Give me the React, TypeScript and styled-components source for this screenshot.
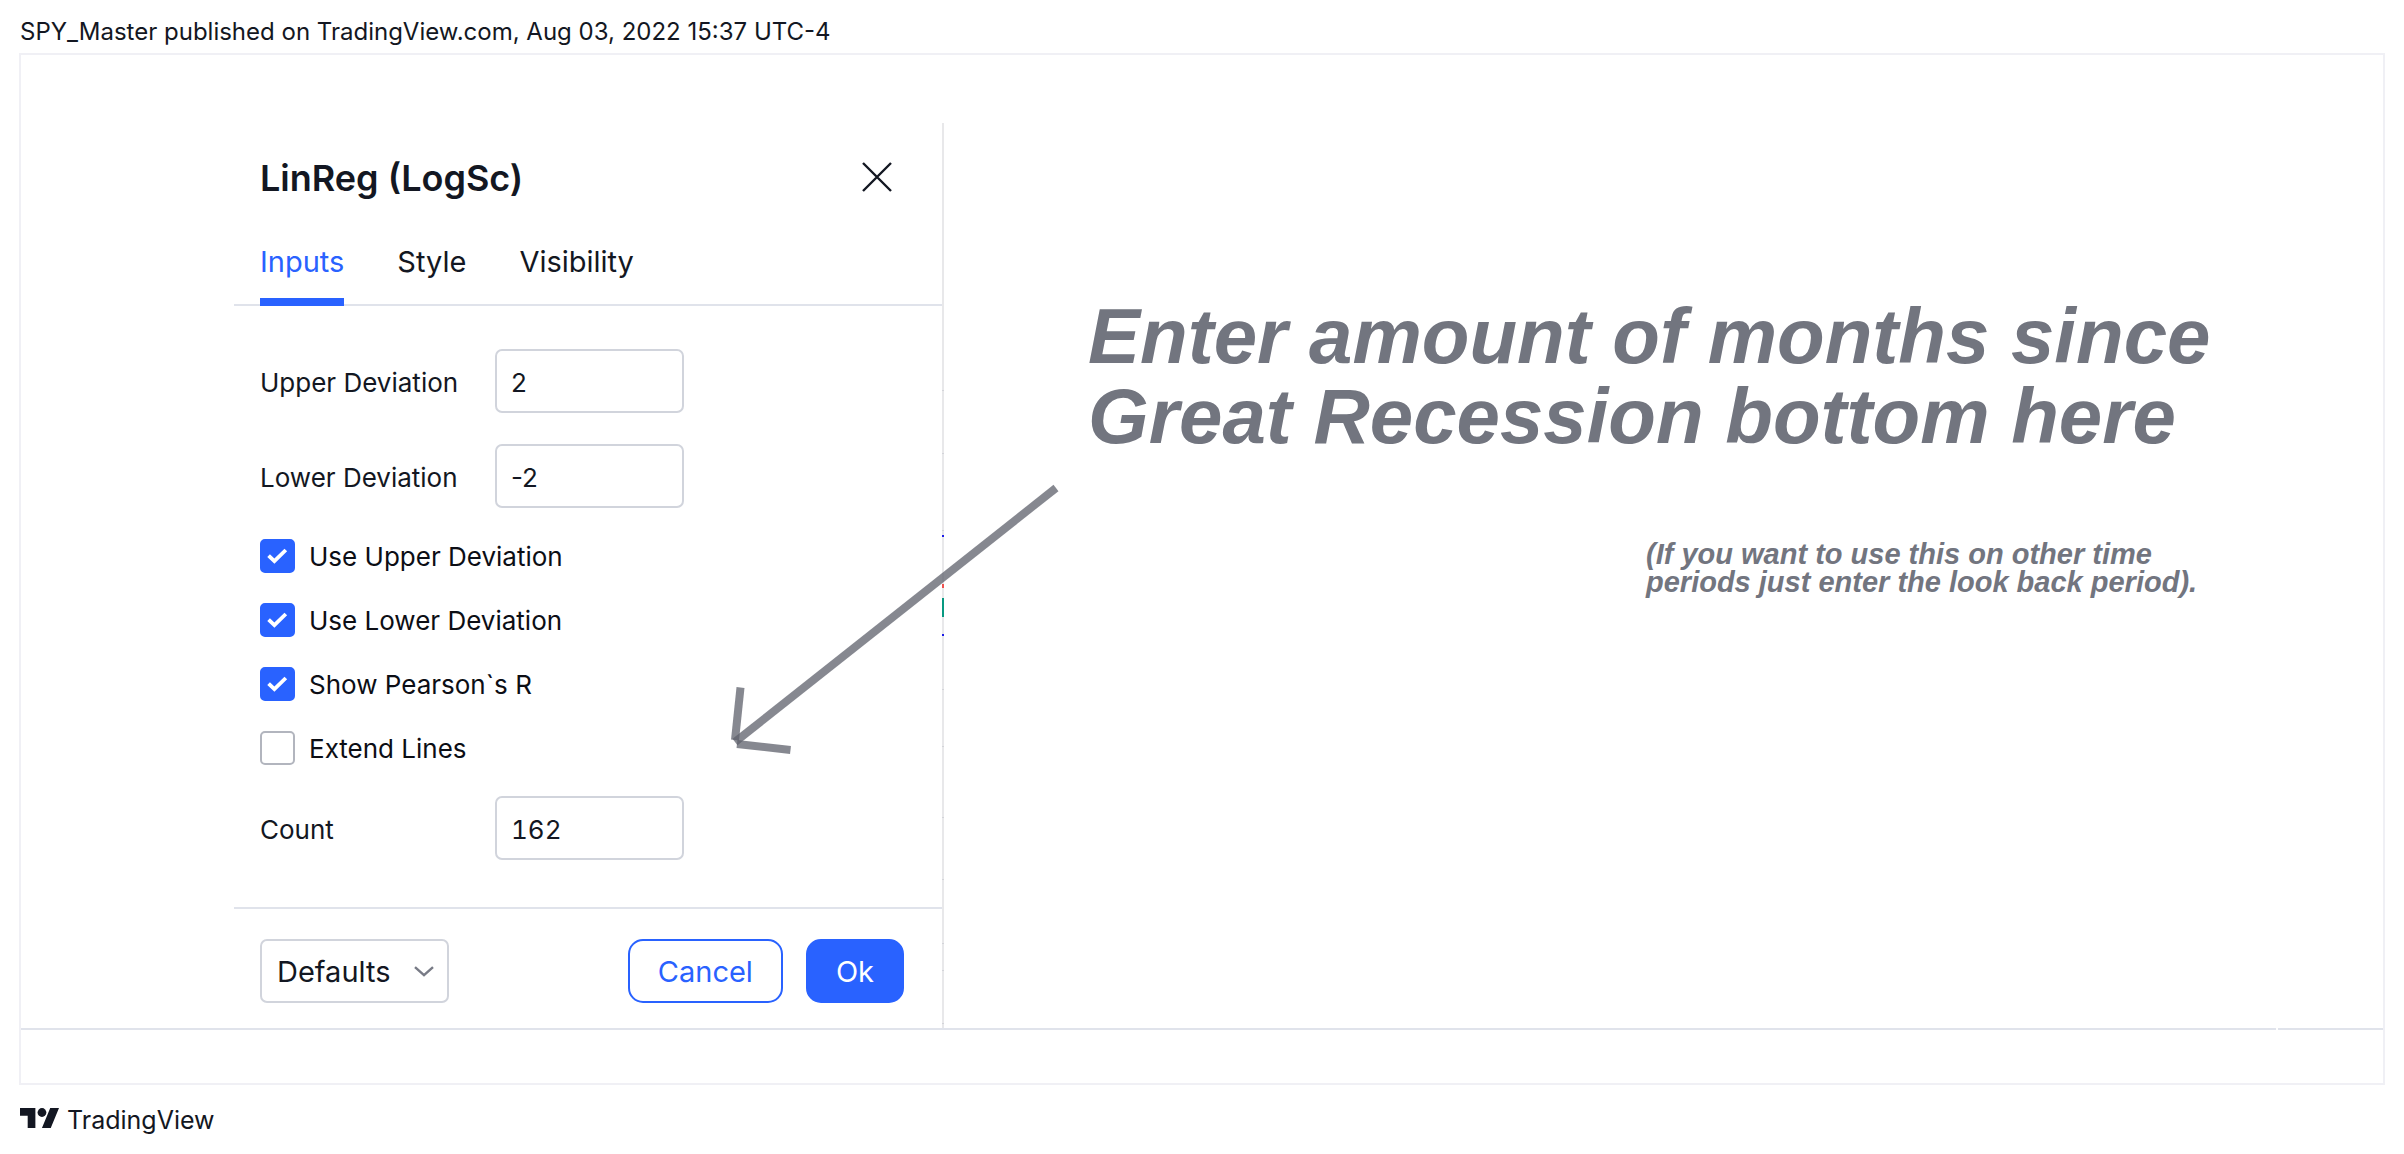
import React, { useState } from "react";
import styled, { createGlobalStyle, css } from "styled-components";

const GlobalStyle = createGlobalStyle`
  * { box-sizing: border-box; }
  body {
    margin: 0;
    background: #ffffff;
    color: #131722;
    font-family: Inter, "Liberation Sans", sans-serif;
  }
  button, input, select { font: inherit; color: inherit; margin: 0; }
`;

const blue = "#2962ff";
const line = "#e0e3eb";
const fieldBorder = "#d1d4dc";

const Page = styled.div`
  display: flex;
  flex-direction: column;
  padding: 0 19px;
`;

const PublishedBy = styled.header`
  padding: 18px 1px 7px;
  font-size: 24px;
  line-height: 28px;
`;

const Frame = styled.main`
  border: 2px solid #f0f0f5;
`;

const Canvas = styled.section`
  position: relative;
  display: flex;
  padding: 68px 0 0 213px;
`;

const Dialog = styled.form`
  flex: none;
  width: 710px;
  border-right: 2px solid #e8e8ea;
  font-size: 26px;
`;

const DialogHeader = styled.div`
  display: flex;
  align-items: center;
  justify-content: space-between;
  height: 108px;
  padding: 0 50px 0 26px;
`;

const Title = styled.h2`
  margin: 0;
  padding-top: 2px;
  font-size: 36px;
  line-height: 44px;
  font-weight: 600;
`;

const CloseButton = styled.button`
  display: flex;
  padding: 0;
  border: 0;
  background: none;
`;

const TabList = styled.div`
  display: flex;
  gap: 53px;
  padding: 0 26px;
  box-shadow: inset 0 -2px ${line};
`;

const Tab = styled.button<{ $active: boolean }>`
  padding: 0 0 5px;
  border: 0;
  border-bottom: 8px solid ${(p) => (p.$active ? blue : "transparent")};
  background: none;
  color: ${(p) => (p.$active ? blue : "#131722")};
  font-size: 29px;
  line-height: 62px;
`;

const Fields = styled.div`
  display: flex;
  flex-direction: column;
  gap: 31px;
  padding: 43px 26px 47px;
`;

const FieldRow = styled.div`
  display: grid;
  grid-template-columns: 235px 189px;
  align-items: center;
`;

const FieldLabel = styled.label`
  padding-top: 2px;
`;

const control = css`
  width: 189px;
  height: 64px;
  border: 2px solid ${fieldBorder};
  border-radius: 7px;
  background: #ffffff;
`;

const NumberBox = styled.input<{ $tabular?: boolean }>`
  ${control}
  padding: 2px 14px 0;
  font-variant-numeric: ${(p) => (p.$tabular ? "tabular-nums" : "normal")};
`;

const CheckList = styled.div`
  display: flex;
  flex-direction: column;
  gap: 30px;
`;

const CheckLabel = styled.label`
  display: flex;
  align-items: center;
  gap: 14px;
  height: 34px;
  color: #0c0e15;
`;

const CheckBox = styled.span`
  display: grid;
  width: 35px;
  height: 34px;

  > * { grid-area: 1 / 1; }
`;

const CheckInput = styled.input`
  appearance: none;
  width: 35px;
  height: 34px;
  border: 2px solid #b2b5be;
  border-radius: 5px;

  &:checked { border-color: ${blue}; background: ${blue}; }
`;

const CheckMark = styled.svg`
  place-self: center;
  pointer-events: none;
`;

const DialogFooter = styled.div`
  display: flex;
  align-items: center;
  gap: 23px;
  padding: 30px 38px 25px 26px;
  border-top: 2px solid ${line};
  font-size: 29px;
`;

const SelectWrap = styled.div`
  display: grid;
  align-items: center;
  margin-right: auto;

  > * { grid-area: 1 / 1; }
`;

const DefaultsSelect = styled.select`
  ${control}
  appearance: none;
  padding: 0 15px;
`;

const Chevron = styled.svg`
  justify-self: end;
  margin-right: 15px;
  pointer-events: none;
`;

const ActionButton = styled.button<{ $primary?: boolean }>`
  height: 64px;
  padding: 0 28px;
  border: 2px solid ${blue};
  border-radius: 15px;
  background: ${(p) => (p.$primary ? blue : "#ffffff")};
  color: ${(p) => (p.$primary ? "#ffffff" : blue)};
`;

const Notes = styled.div`
  flex: 1;
  padding: 173px 0 0 144px;
  color: #72757f;
  font-family: "Liberation Sans", Arial, sans-serif;
  font-style: italic;
`;

const BigNote = styled.h1`
  margin: 0;
  font-size: 78px;
  line-height: 80px;
  font-weight: 700;
  white-space: nowrap;
`;

const SmallNote = styled.p`
  margin: 84px 0 0 558px;
  font-size: 29px;
  line-height: 28px;
  font-weight: 700;
  white-space: nowrap;
`;

const Drawing = styled.svg`
  position: absolute;
  top: 0;
  left: 0;
  pointer-events: none;
`;

const TimeAxis = styled.div`
  display: flex;
  gap: 2px;
  height: 55px;
`;

const AxisPart = styled.div<{ $width?: string }>`
  flex: ${(p) => (p.$width ? "none" : "1")};
  width: ${(p) => p.$width ?? "auto"};
  border-top: 2px solid ${line};
`;

const Brand = styled.footer`
  display: flex;
  align-items: center;
  gap: 8px;
  padding: 19px 1px;
  font-size: 25px;
  line-height: 32px;
`;

const BrandMark = styled.svg`
  margin-bottom: 4px;
`;

const TABS = ["Inputs", "Style", "Visibility"];

const CHECKS = [
  { label: "Use Upper Deviation", on: true },
  { label: "Use Lower Deviation", on: true },
  { label: "Show Pearson`s R", on: true },
  { label: "Extend Lines", on: false },
];

const GRID_TICKS = [390, 453, 530, 689, 746, 817, 879, 943, 970, 1023];

type FieldProps = { id: string; label: string; value: string; tabular?: boolean };

function Field({ id, label, value, tabular }: FieldProps) {
  return (
    <FieldRow>
      <FieldLabel htmlFor={id}>{label}</FieldLabel>
      <NumberBox id={id} type="text" inputMode="numeric" defaultValue={value} $tabular={tabular} />
    </FieldRow>
  );
}

function Check({ label, on }: { label: string; on: boolean }) {
  const [checked, setChecked] = useState(on);
  return (
    <CheckLabel>
      <CheckBox>
        <CheckInput type="checkbox" checked={checked} onChange={(e) => setChecked(e.target.checked)} />
        {checked && (
          <CheckMark width="21" height="17" viewBox="0 0 21 17" fill="none" aria-hidden="true">
            <path d="M1.6 7.6 7.4 13.2 18.8 2" stroke="#fff" strokeWidth="3.8" />
          </CheckMark>
        )}
      </CheckBox>
      {label}
    </CheckLabel>
  );
}

export default function App() {
  const [tab, setTab] = useState("Inputs");
  return (
    <>
      <GlobalStyle />
      <Page>
        <PublishedBy>SPY_Master published on TradingView.com, Aug 03, 2022 15:37 UTC-4</PublishedBy>
        <Frame>
          <Canvas>
            <Dialog onSubmit={(e) => e.preventDefault()}>
              <DialogHeader>
                <Title>LinReg (LogSc)</Title>
                <CloseButton type="button" aria-label="Close">
                  <svg width="30" height="30" viewBox="0 0 30 30" stroke="#131722" strokeWidth="2.4" aria-hidden="true">
                    <path d="M1 1 29 29M29 1 1 29" />
                  </svg>
                </CloseButton>
              </DialogHeader>
              <TabList role="tablist">
                {TABS.map((name) => (
                  <Tab
                    key={name}
                    type="button"
                    role="tab"
                    aria-selected={tab === name}
                    $active={tab === name}
                    onClick={() => setTab(name)}
                  >
                    {name}
                  </Tab>
                ))}
              </TabList>
              <Fields>
                <Field id="upper" label="Upper Deviation" value="2" />
                <Field id="lower" label="Lower Deviation" value="-2" />
                <CheckList>
                  {CHECKS.map((c) => (
                    <Check key={c.label} {...c} />
                  ))}
                </CheckList>
                <Field id="count" label="Count" value="162" tabular />
              </Fields>
              <DialogFooter>
                <SelectWrap>
                  <DefaultsSelect aria-label="Defaults">
                    <option>Defaults</option>
                  </DefaultsSelect>
                  <Chevron width="20" height="11" viewBox="0 0 20 11" fill="none" aria-hidden="true">
                    <path d="M1 1.2 10 9.2 19 1.2" stroke="#787b86" strokeWidth="2.4" />
                  </Chevron>
                </SelectWrap>
                <ActionButton type="button">Cancel</ActionButton>
                <ActionButton type="submit" $primary>
                  Ok
                </ActionButton>
              </DialogFooter>
            </Dialog>
            <Notes>
              <BigNote>
                Enter amount of months since
                <br />
                Great Recession bottom here
              </BigNote>
              <SmallNote>
                (If you want to use this on other time
                <br />
                periods just enter the look back period).
              </SmallNote>
            </Notes>
            <Drawing width="1060" height="973" viewBox="21 55 1060 973" aria-hidden="true">
              <g fill="#d3d4d9">
                {GRID_TICKS.map((y) => (
                  <rect key={y} x="942" y={y} width="2" height="1" />
                ))}
              </g>
              <rect x="942" y="535" width="2" height="2" fill="#1c1ce8" />
              <rect x="942" y="584" width="2" height="4" fill="#ef5350" />
              <rect x="942" y="598" width="2" height="19" fill="#089981" />
              <rect x="942" y="634" width="2" height="2" fill="#1c1ce8" />
              <g stroke="#5d606b" strokeOpacity="0.75" strokeWidth="8">
                <path d="M1056 488 735 742" />
                <path d="M740.5 687.5 735 740" />
                <path d="M737 744 790.5 750" />
              </g>
            </Drawing>
          </Canvas>
          <TimeAxis>
            <AxisPart />
            <AxisPart $width="105px" />
          </TimeAxis>
        </Frame>
        <Brand>
          <BrandMark width="39" height="20" viewBox="0 4 35.5 18" fill="#131722" aria-hidden="true">
            <path d="M14 22H7V11H0V4h14v18zM28 22h-8l7.5-18h8L28 22z" />
            <circle cx="20" cy="8" r="4" />
          </BrandMark>
          TradingView
        </Brand>
      </Page>
    </>
  );
}
